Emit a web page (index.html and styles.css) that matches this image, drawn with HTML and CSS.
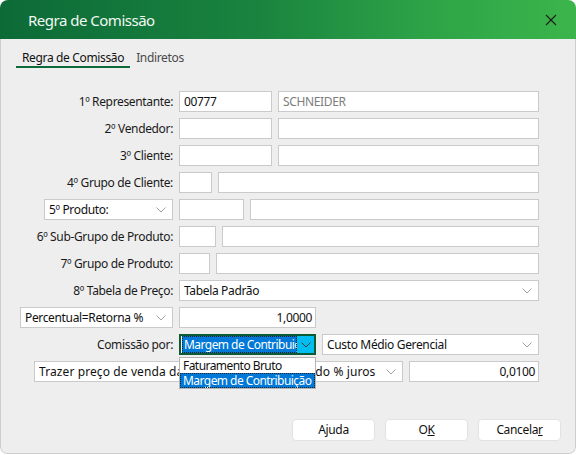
FILE: index.html
```html
<!DOCTYPE html>
<html lang="pt-BR">
<head>
<meta charset="utf-8">
<title>Regra de Comissão</title>
<link rel="stylesheet" href="styles.css">
</head>
<body>
<div class="window">
  <div class="titlebar">
    <span class="title">Regra de Comissão</span>
    <svg class="close" width="12" height="12" viewBox="0 0 12 12"><path d="M1 1 L11 11 M11 1 L1 11" stroke="#1c1c1c" stroke-width="1.1" fill="none"/></svg>
  </div>
  <div class="client">
    <div class="tabs">
      <div class="tab active">Regra de Comissão</div>
      <div class="tab">Indiretos</div>
    </div>

    <div class="form">
      <div class="row">
        <div class="lbl">1º Representante:</div>
        <div class="field w93">00777</div>
        <div class="field grow muted">SCHNEIDER</div>
      </div>
      <div class="row">
        <div class="lbl">2º Vendedor:</div>
        <div class="field w93"></div>
        <div class="field grow"></div>
      </div>
      <div class="row">
        <div class="lbl">3º Cliente:</div>
        <div class="field w93"></div>
        <div class="field grow"></div>
      </div>
      <div class="row">
        <div class="lbl">4º Grupo de Cliente:</div>
        <div class="field w33"></div>
        <div class="field grow"></div>
      </div>
      <div class="row">
        <div class="lbl">
          <div class="select w129"><span class="stext">5º Produto:</span><svg class="chev" width="10" height="6" viewBox="0 0 10 6"><path d="M0.5 0.5 L5 5 L9.5 0.5" stroke="#a3a3a3" fill="none"/></svg></div>
        </div>
        <div class="field w65"></div>
        <div class="field grow"></div>
      </div>
      <div class="row">
        <div class="lbl">6º Sub-Grupo de Produto:</div>
        <div class="field w37"></div>
        <div class="field grow"></div>
      </div>
      <div class="row">
        <div class="lbl">7º Grupo de Produto:</div>
        <div class="field w31"></div>
        <div class="field grow"></div>
      </div>
      <div class="row">
        <div class="lbl">8º Tabela de Preço:</div>
        <div class="select grow"><span class="stext">Tabela Padrão</span><svg class="chev" width="10" height="6" viewBox="0 0 10 6"><path d="M0.5 0.5 L5 5 L9.5 0.5" stroke="#a3a3a3" fill="none"/></svg></div>
      </div>
      <div class="row">
        <div class="lbl">
          <div class="select w153"><span class="stext">Percentual=Retorna %</span><svg class="chev" width="10" height="6" viewBox="0 0 10 6"><path d="M0.5 0.5 L5 5 L9.5 0.5" stroke="#a3a3a3" fill="none"/></svg></div>
        </div>
        <div class="field w137 num">1,0000</div>
      </div>
      <div class="row">
        <div class="lbl">Comissão por:</div>
        <div class="combo">
          <div class="focus-select">
            <div class="hl"><span>Margem de Contribuição</span></div>
            <div class="abtn"><svg width="10" height="6" viewBox="0 0 10 6"><path d="M0.5 0.5 L5 5 L9.5 0.5" stroke="#3a3a3a" fill="none"/></svg></div>
          </div>
          <div class="dropdown">
            <div class="opt">Faturamento Bruto</div>
            <div class="opt sel">Margem de Contribuição</div>
          </div>
        </div>
        <div class="select grow"><span class="stext">Custo Médio Gerencial</span><svg class="chev" width="10" height="6" viewBox="0 0 10 6"><path d="M0.5 0.5 L5 5 L9.5 0.5" stroke="#a3a3a3" fill="none"/></svg></div>
      </div>
      <div class="row indent">
        <div class="select w369"><span class="stext wide">Trazer preço de venda da Nota Fiscal considerando % juros</span><svg class="chev" width="10" height="6" viewBox="0 0 10 6"><path d="M0.5 0.5 L5 5 L9.5 0.5" stroke="#a3a3a3" fill="none"/></svg></div>
        <div class="field grow num">0,0100</div>
      </div>
    </div>

    <div class="buttons">
      <div class="btn">Ajuda</div>
      <div class="btn">O<u>K</u></div>
      <div class="btn">Cancela<u>r</u></div>
    </div>
  </div>
</div>
</body>
</html>
```

FILE: styles.css
```css
* { box-sizing: border-box; }
html, body { margin: 0; padding: 0; background: #ffffff; }
body {
  width: 576px;
  height: 455px;
  font-family: "Noto Sans", "Open Sans", sans-serif;
  font-size: 12px;
  letter-spacing: -0.35px;
  color: #1a1a1a;
  overflow: hidden;
}
.window {
  width: 576px;
  height: 454px;
  border-radius: 8px 8px 7px 7px;
  overflow: hidden;
  display: flex;
  flex-direction: column;
}
.titlebar {
  height: 39px;
  flex: none;
  background: linear-gradient(90deg, #0c6a37 0%, #1a843f 45%, #2ea447 75%, #3bb54b 100%);
  display: flex;
  align-items: center;
  justify-content: space-between;
  padding: 0 19px 0 28px;
}
.title {
  color: #f3f8f4;
  font-size: 15px;
  letter-spacing: -0.5px;
}
.close { display: block; }
.client {
  flex: 1;
  background: #eeeeee;
  border: 1px solid #cdcdcd;
  border-top: none;
  border-radius: 0 0 7px 7px;
  display: flex;
  flex-direction: column;
}
.tabs {
  display: flex;
  padding: 10px 0 0 15px;
  gap: 0;
}
.tab {
  line-height: 17px;
  padding: 0 6px;
  border-bottom: 2px solid transparent;
  color: #4a4a4a;
}
.tab.active {
  color: #111;
  border-bottom-color: #0e6a3a;
}
.form {
  padding: 23px 36px 0 15px;
  display: flex;
  flex-direction: column;
  gap: 6px;
}
.row {
  display: flex;
  align-items: center;
  height: 21px;
  gap: 6px;
}
.row.indent { padding-left: 18px; }
.lbl {
  width: 157px;
  flex: none;
  text-align: right;
  display: flex;
  justify-content: flex-end;
  white-space: nowrap;
}
.field, .select {
  height: 21px;
  background: #ffffff;
  border: 1px solid #cacaca;
  padding: 0 4px;
  line-height: 19px;
  white-space: nowrap;
  overflow: hidden;
  color: #111;
  flex: none;
}
.grow { flex: 1; min-width: 0; }
.muted { color: #7d7d7d; }
.num { text-align: right; padding-right: 3px; }
.w31 { width: 31px; }
.w33 { width: 33px; }
.w37 { width: 37px; }
.w65 { width: 65px; }
.w93 { width: 93px; }
.w129 { width: 129px; }
.w137 { width: 137px; }
.w153 { width: 153px; }
.w369 { width: 369px; }
.select {
  display: flex;
  align-items: center;
  padding: 0 6px 0 4px;
  text-align: left;
}
.stext { flex: 1; overflow: hidden; white-space: nowrap; min-width: 0; }
.stext.wide { letter-spacing: 0.1px; }
.chev { flex: none; margin-left: 4px; }
.combo {
  position: relative;
  width: 137px;
  height: 21px;
  flex: none;
}
.focus-select {
  width: 137px;
  height: 21px;
  border: 2px solid #0b5c34;
  background: #fff;
  display: flex;
}
.hl {
  flex: 1;
  min-width: 0;
  margin: 0 0 0 1px;
  background: #0078d7;
  color: #fff;
  outline: 1px dotted #222;
  outline-offset: -1px;
  overflow: hidden;
  white-space: nowrap;
  line-height: 17px;
  padding-left: 2px;
  letter-spacing: -0.55px;
}
.abtn {
  width: 17px;
  flex: none;
  background: #00bdf2;
  display: flex;
  align-items: center;
  justify-content: center;
}
.dropdown {
  position: absolute;
  left: 0;
  top: 23px;
  width: 137px;
  background: #fff;
  border: 1px solid #b4b4b4;
  z-index: 5;
}
.opt {
  height: 15px;
  line-height: 15px;
  padding-left: 3px;
  white-space: nowrap;
  overflow: hidden;
  color: #111;
  letter-spacing: -0.55px;
}
.opt.sel {
  background: #0078d7;
  color: #fff;
  outline: 1px dotted #222;
  outline-offset: -1px;
}
.buttons {
  margin-top: auto;
  display: flex;
  justify-content: flex-end;
  gap: 10px;
  padding: 0 14px 12px 0;
}
.btn {
  width: 83px;
  height: 22px;
  background: #ffffff;
  border: 1px solid #e2e2e2;
  border-radius: 4px;
  text-align: center;
  line-height: 20px;
  color: #111;
}
```
